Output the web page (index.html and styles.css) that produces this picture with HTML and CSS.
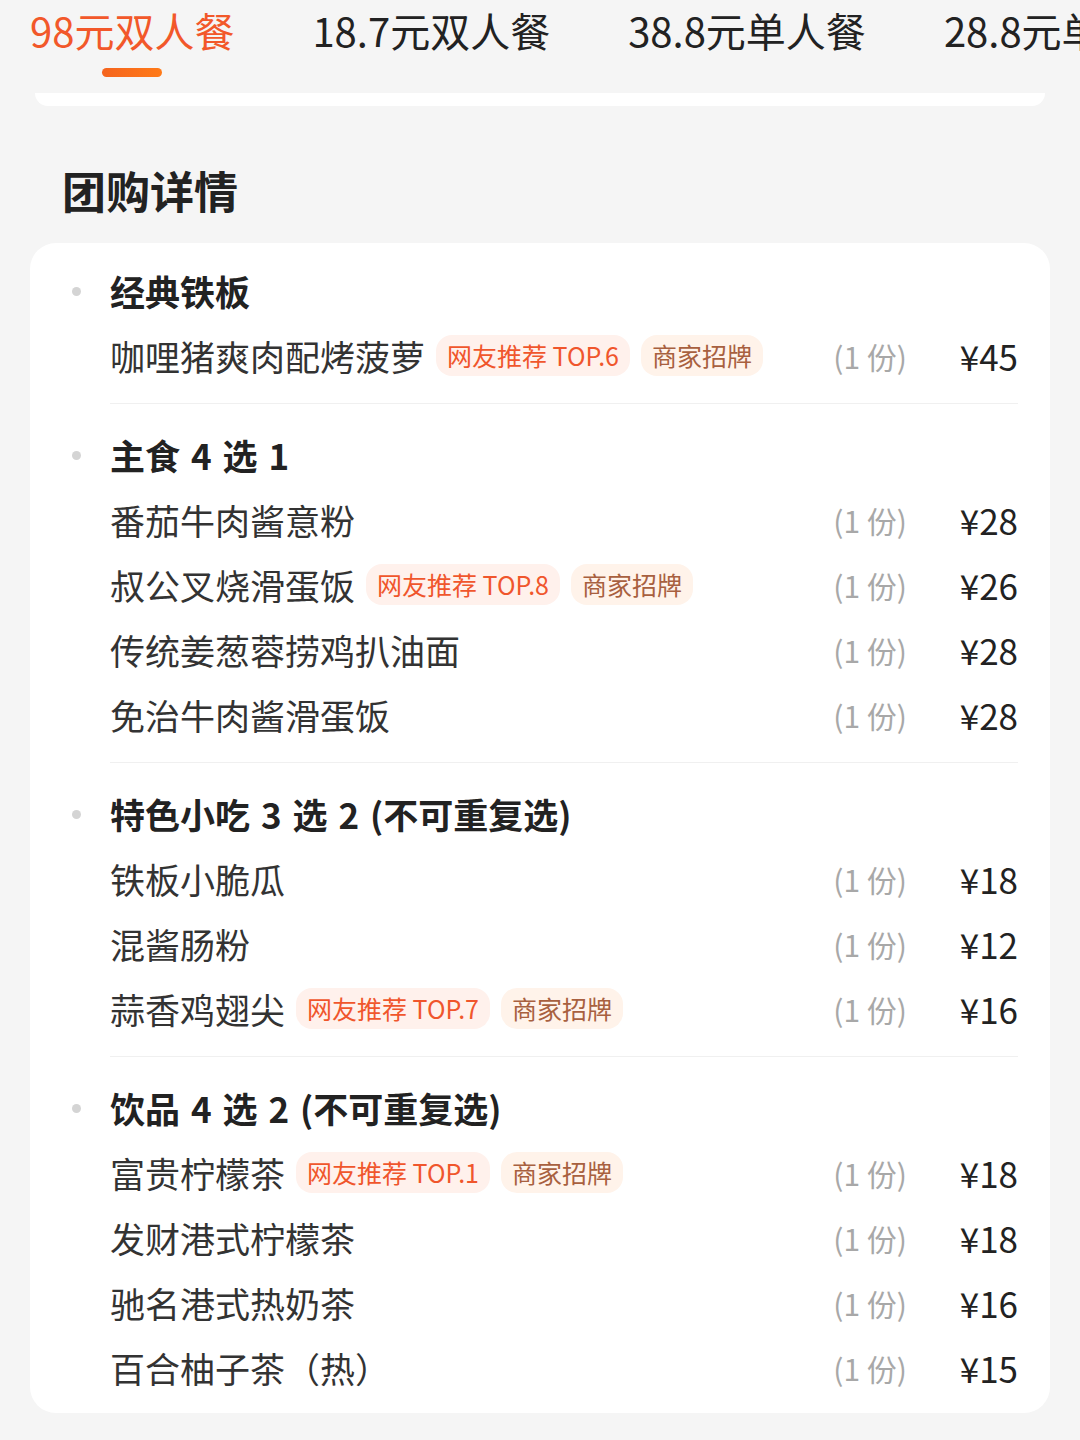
FILE: index.html
```html
<!DOCTYPE html>
<html lang="zh-CN">
<head>
    <meta charset="UTF-8">
    <meta name="viewport" content="width=device-width, initial-scale=1.0">
    <title>团购详情</title>
    <link rel="stylesheet" href="styles.css">
</head>
<body>
    <div class="tabs">
        <div class="tab active">98元双人餐</div>
        <div class="tab">18.7元双人餐</div>
        <div class="tab">38.8元单人餐</div>
        <div class="tab">28.8元单人餐</div>
    </div>
    <div class="card-tail"></div>

    <h2 class="heading">团购详情</h2>

    <div class="detail-card">
        <div class="group">
            <div class="group-title">经典铁板</div>
            <div class="item">
                <span class="name">咖哩猪爽肉配烤菠萝</span>
                <span class="tag hot">网友推荐 TOP.6</span>
                <span class="tag sign">商家招牌</span>
                <span class="qty">(1 份)</span>
                <span class="price">¥45</span>
            </div>
        </div>

        <div class="group">
            <div class="group-title">主食 4 选 1</div>
            <div class="item">
                <span class="name">番茄牛肉酱意粉</span>
                <span class="qty">(1 份)</span>
                <span class="price">¥28</span>
            </div>
            <div class="item">
                <span class="name">叔公叉烧滑蛋饭</span>
                <span class="tag hot">网友推荐 TOP.8</span>
                <span class="tag sign">商家招牌</span>
                <span class="qty">(1 份)</span>
                <span class="price">¥26</span>
            </div>
            <div class="item">
                <span class="name">传统姜葱蓉捞鸡扒油面</span>
                <span class="qty">(1 份)</span>
                <span class="price">¥28</span>
            </div>
            <div class="item">
                <span class="name">免治牛肉酱滑蛋饭</span>
                <span class="qty">(1 份)</span>
                <span class="price">¥28</span>
            </div>
        </div>

        <div class="group">
            <div class="group-title">特色小吃 3 选 2 (不可重复选)</div>
            <div class="item">
                <span class="name">铁板小脆瓜</span>
                <span class="qty">(1 份)</span>
                <span class="price">¥18</span>
            </div>
            <div class="item">
                <span class="name">混酱肠粉</span>
                <span class="qty">(1 份)</span>
                <span class="price">¥12</span>
            </div>
            <div class="item">
                <span class="name">蒜香鸡翅尖</span>
                <span class="tag hot">网友推荐 TOP.7</span>
                <span class="tag sign">商家招牌</span>
                <span class="qty">(1 份)</span>
                <span class="price">¥16</span>
            </div>
        </div>

        <div class="group">
            <div class="group-title">饮品 4 选 2 (不可重复选)</div>
            <div class="item">
                <span class="name">富贵柠檬茶</span>
                <span class="tag hot">网友推荐 TOP.1</span>
                <span class="tag sign">商家招牌</span>
                <span class="qty">(1 份)</span>
                <span class="price">¥18</span>
            </div>
            <div class="item">
                <span class="name">发财港式柠檬茶</span>
                <span class="qty">(1 份)</span>
                <span class="price">¥18</span>
            </div>
            <div class="item">
                <span class="name">驰名港式热奶茶</span>
                <span class="qty">(1 份)</span>
                <span class="price">¥16</span>
            </div>
            <div class="item">
                <span class="name">百合柚子茶（热）</span>
                <span class="qty">(1 份)</span>
                <span class="price">¥15</span>
            </div>
        </div>
    </div>
</body>
</html>
```

FILE: styles.css
```css
body {
    margin: 0;
    background: #f5f5f5;
    font-family: "Noto Sans CJK SC", "Noto Sans", sans-serif;
    color: #222;
    overflow: hidden;
}
.tabs {
    display: flex;
    gap: 78px;
    padding: 5px 0 0 30px;
    height: 85px;
    box-sizing: border-box;
    white-space: nowrap;
    overflow: hidden;
}
.tab {
    font-size: 40px;
    line-height: 50px;
    color: #222;
    position: relative;
    flex-shrink: 0;
}
.tab.active {
    color: #f2582a;
}
.tab.active::after {
    content: "";
    position: absolute;
    left: 50%;
    top: 63px;
    width: 60px;
    height: 9px;
    margin-left: -30px;
    border-radius: 5px;
    background: linear-gradient(90deg, #f5641e, #ff7a18);
}
.card-tail {
    margin: 8px 35px 0;
    height: 13px;
    background: #fff;
    border-radius: 0 0 14px 14px;
}
.heading {
    margin: 0;
    padding: 54px 0 0 62px;
    height: 117px;
    box-sizing: border-box;
    font-size: 44px;
    line-height: 60px;
    font-weight: bold;
    color: #222;
}
.detail-card {
    margin: 20px 30px 0;
    background: #fff;
    border-radius: 26px;
    padding: 0 32px 0 80px;
}
.group {
    padding: 18px 0 15px;
    border-bottom: 1px solid #f0f0f0;
}
.group:first-child {
    padding-top: 15px;
}
.group:last-child {
    border-bottom: none;
    padding-bottom: 13px;
}
.group-title {
    position: relative;
    height: 65px;
    line-height: 65px;
    font-size: 35px;
    font-weight: bold;
    word-spacing: 3px;
    color: #222;
}
.group-title::before {
    content: "";
    position: absolute;
    left: -38px;
    top: 29px;
    width: 9px;
    height: 9px;
    border-radius: 50%;
    background: #d4d4d4;
}
.item {
    display: flex;
    align-items: center;
    height: 65px;
    font-size: 35px;
    color: #333;
}
.name {
    margin-right: 11px;
}
.tag {
    font-size: 25px;
    line-height: 41px;
    padding: 0 11px;
    border-radius: 16px;
    margin-right: 11px;
}
.tag.hot {
    background: #fff1ec;
    color: #f0562c;
}
.tag.sign {
    background: #fff3ea;
    color: #a8603f;
}
.qty {
    margin-left: auto;
    font-size: 30px;
    color: #a8a8a8;
}
.price {
    width: 111px;
    text-align: right;
    font-size: 35px;
    color: #222;
}
```
